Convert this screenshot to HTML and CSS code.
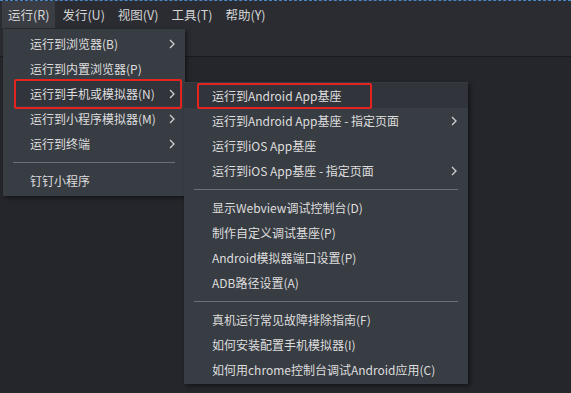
FILE: index.html
```html
<!DOCTYPE html>
<html>
<head>
<meta charset="utf-8">
<title>运行菜单</title>
<link rel="stylesheet" href="styles.css">
</head>
<body>

<div class="menubar">
<span class="mb_item active">运行(R)</span>
<span class="mb_item">发行(U)</span>
<span class="mb_item">视图(V)</span>
<span class="mb_item">工具(T)</span>
<span class="mb_item">帮助(Y)</span>
</div>
<div class="toolbar"></div>
<div class="editor"></div>

<div class="menu m_main">
<div class="m_row"><span>运行到浏览器(B)</span><svg class="chev" viewBox="0 0 6 10"><path d="M1 1 L5 5 L1 9"/></svg></div>
<div class="m_row"><span>运行到内置浏览器(P)</span></div>
<div class="m_row hl"><span>运行到手机或模拟器(N)</span><svg class="chev" viewBox="0 0 6 10"><path d="M1 1 L5 5 L1 9"/></svg></div>
<div class="m_row"><span>运行到小程序模拟器(M)</span><svg class="chev" viewBox="0 0 6 10"><path d="M1 1 L5 5 L1 9"/></svg></div>
<div class="m_row"><span>运行到终端</span><svg class="chev" viewBox="0 0 6 10"><path d="M1 1 L5 5 L1 9"/></svg></div>
<div class="m_sep"></div>
<div class="m_row"><span>钉钉小程序</span></div>
</div>

<div class="menu m_sub">
<div class="m_row hl"><span>运行到Android App基座</span></div>
<div class="m_row"><span>运行到Android App基座 - 指定页面</span><svg class="chev" viewBox="0 0 6 10"><path d="M1 1 L5 5 L1 9"/></svg></div>
<div class="m_row"><span>运行到iOS App基座</span></div>
<div class="m_row"><span>运行到iOS App基座 - 指定页面</span><svg class="chev" viewBox="0 0 6 10"><path d="M1 1 L5 5 L1 9"/></svg></div>
<div class="m_sep"></div>
<div class="m_row"><span>显示Webview调试控制台(D)</span></div>
<div class="m_row"><span>制作自定义调试基座(P)</span></div>
<div class="m_row"><span>Android模拟器端口设置(P)</span></div>
<div class="m_row"><span>ADB路径设置(A)</span></div>
<div class="m_sep"></div>
<div class="m_row"><span>真机运行常见故障排除指南(F)</span></div>
<div class="m_row"><span>如何安装配置手机模拟器(I)</span></div>
<div class="m_row"><span>如何用chrome控制台调试Android应用(C)</span></div>
</div>

<div class="redbox rb_main"></div>
<div class="redbox rb_sub"></div>

</body>
</html>
```

FILE: styles.css
```css
html, body {margin:0;padding:0;}
body {width:571px;height:393px;overflow:hidden;position:relative;background:#25272c;font-family:"Noto Sans CJK SC","Noto Sans",sans-serif;font-size:12px;color:#dedede;}

.menubar {height:27px;display:flex;align-items:stretch;padding-left:2px;background:#2a2c32;border-top:1px dashed #4a86c5;}
.mb_item {display:flex;align-items:center;padding:0 6px;margin-right:1px;font-size:12.5px;color:#d4d4d4;}
.mb_item.active {background:#3a3d44;}

.toolbar {height:28px;background:#2a2c32;border-bottom:1px solid #1a1b1f;}
.editor {height:336px;background:#24262b;}

.menu {position:absolute;background:#383c43;box-shadow:2px 2px 4px rgba(0,0,0,0.45);display:flex;flex-direction:column;}
.m_main {left:3px;top:29px;width:182px;padding:2px 0 3px 0;}
.m_sub {left:184px;top:82px;width:284px;padding:1px 0 2px 0;}

.m_row {height:25px;flex-shrink:0;display:flex;align-items:center;justify-content:space-between;padding:0 10px 0 27px;}
.m_sub .m_row {padding:0 11px 0 28px;}
.m_row.hl {background:#31343a;}
.m_main .m_row.hl {margin:0 4px 0 12px;padding-left:15px;padding-right:6px;}
.m_sep {height:1px;flex-shrink:0;background:#6b6f76;margin:6px 10px 5px 10px;}

.chev {width:6px;height:10px;}
.chev path {fill:none;stroke:#cfd1d4;stroke-width:1.3;}

.redbox {position:absolute;border:2px solid #e5231f;border-radius:2px;}
.rb_main {left:14px;top:79px;width:164px;height:26px;}
.rb_sub {left:197px;top:83px;width:171px;height:22px;}
```
